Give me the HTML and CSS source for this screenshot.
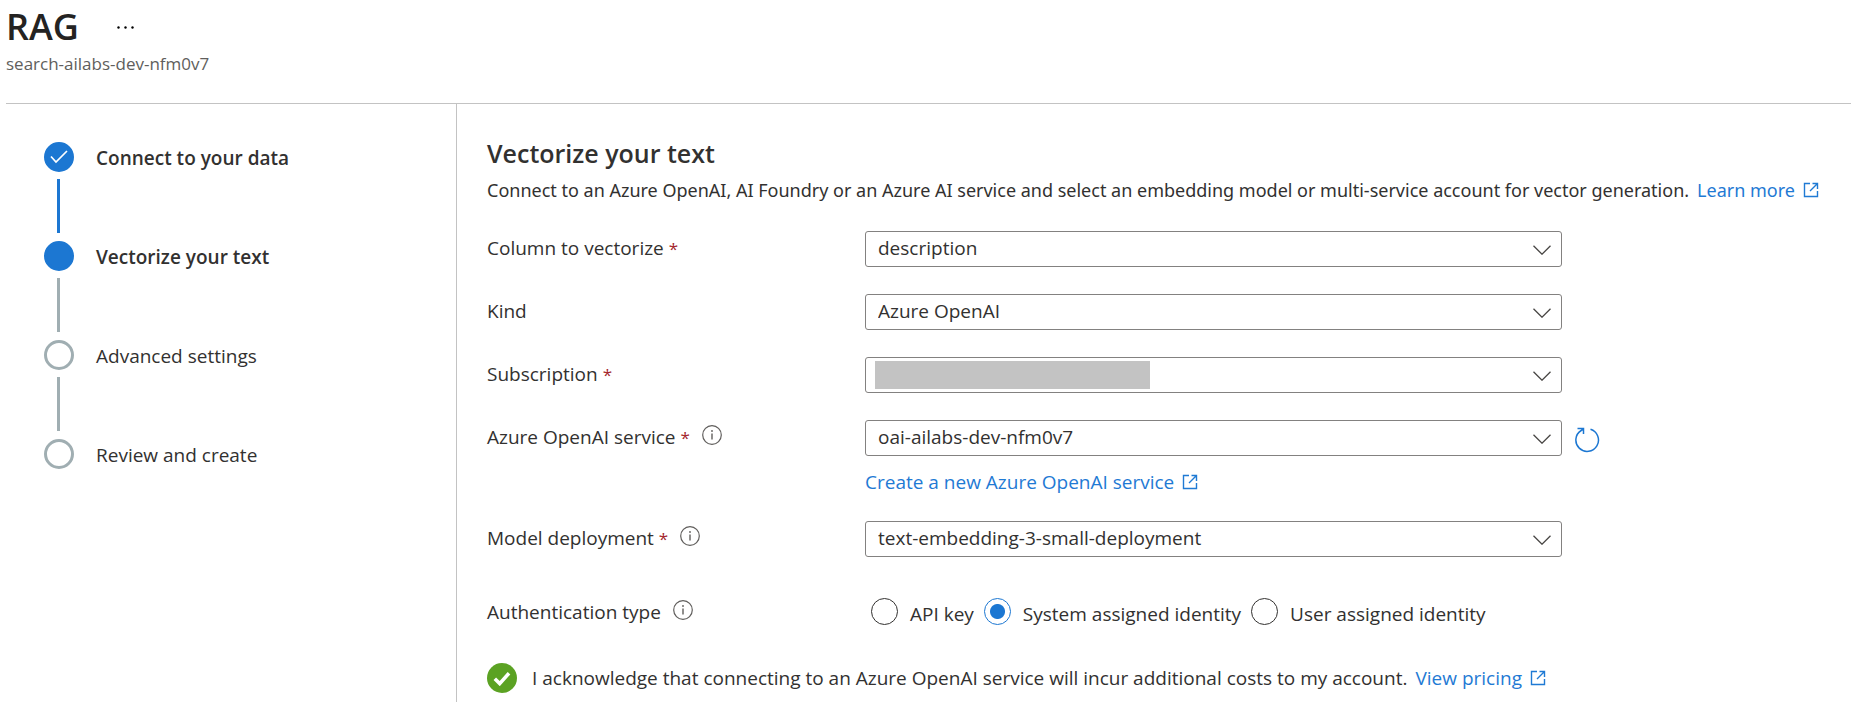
FILE: index.html
```html
<!DOCTYPE html>
<html lang="en">
<head>
<meta charset="utf-8">
<meta name="viewport" content="width=device-width, initial-scale=1">
<title>RAG</title>
<link rel="stylesheet" href="styles.css">
</head>
<body>
<svg class="sprite" aria-hidden="true">
  <symbol id="external" viewBox="0 0 16 16"><path d="M7 1.5H1.5v13h13V9M9.5 1.5h5V7M14.5 1.5 7 9" fill="none" stroke="currentColor" stroke-width="1.4"/></symbol>
  <symbol id="chevron" viewBox="0 0 18 10"><path d="M.5.8 9 9.2 17.5.8" fill="none" stroke="currentColor" stroke-width="1.3"/></symbol>
  <symbol id="info" viewBox="0 0 20 20"><circle cx="10" cy="10" r="9.3" fill="none" stroke="currentColor" stroke-width="1.2"/><path d="M10 8.4v6" stroke="currentColor" stroke-width="1.4"/><circle cx="10" cy="6" r=".9" fill="currentColor"/></symbol>
</svg>
<header class="header">
  <div class="title-row">
    <h1 class="title">RAG</h1>
    <button class="more" type="button" aria-label="More actions"><svg viewBox="0 0 17 3" width="17" height="3"><circle cx="1.5" cy="1.5" r="1.2"/><circle cx="8.5" cy="1.5" r="1.2"/><circle cx="15.5" cy="1.5" r="1.2"/></svg></button>
  </div>
  <p class="subtitle">search-ailabs-dev-nfm0v7</p>
</header>
<div class="layout">
  <nav class="sidebar" aria-label="Wizard steps">
    <ol class="steps">
      <li class="step step-done"><span class="dot"><svg viewBox="0 0 18 14" width="18" height="14"><path d="M1 6.5 6 12 17 1" fill="none" stroke="currentColor" stroke-width="1.7"/></svg></span><span class="step-name">Connect to your data</span></li>
      <li class="step step-current" aria-current="step"><span class="dot"></span><span class="step-name">Vectorize your text</span></li>
      <li class="step"><span class="dot"></span><span class="step-name">Advanced settings</span></li>
      <li class="step"><span class="dot"></span><span class="step-name">Review and create</span></li>
    </ol>
  </nav>
  <main class="main">
    <h2 class="heading">Vectorize your text</h2>
    <p class="intro"><span>Connect to an Azure OpenAI, AI Foundry or an Azure AI service and select an embedding model or multi-service account for vector generation.</span> <a class="link" href="#">Learn more<svg class="external"><use href="#external"/></svg></a></p>
    <form class="form">
      <div class="row">
        <div class="label"><label for="column">Column to vectorize <span class="required">*</span></label></div>
        <div class="select"><select id="column" required><option>description</option></select><svg class="chevron"><use href="#chevron"/></svg></div>
      </div>
      <div class="row">
        <div class="label"><label for="kind">Kind</label></div>
        <div class="select"><select id="kind"><option>Azure OpenAI</option></select><svg class="chevron"><use href="#chevron"/></svg></div>
      </div>
      <div class="row">
        <div class="label"><label for="subscription">Subscription <span class="required">*</span></label></div>
        <div class="select"><select id="subscription"><option></option></select><span class="redacted"></span><svg class="chevron"><use href="#chevron"/></svg></div>
      </div>
      <div class="row">
        <div class="label"><label for="service">Azure OpenAI service <span class="required">*</span></label><svg class="info"><use href="#info"/></svg></div>
        <div class="field">
          <div class="select"><select id="service"><option>oai-ailabs-dev-nfm0v7</option></select><svg class="chevron"><use href="#chevron"/></svg></div>
          <a class="link" href="#">Create a new Azure OpenAI service<svg class="external"><use href="#external"/></svg></a>
        </div>
        <button class="refresh" type="button" aria-label="Refresh"><svg viewBox="0 0 26 26" width="26" height="26"><path d="M16.5 2.3A11.3 11.3 0 1 1 7.2 3.5L9.5 2M3.5 1.6H9.5V7" fill="none" stroke="currentColor" stroke-width="1.5"/></svg></button>
      </div>
      <div class="row">
        <div class="label"><label for="model">Model deployment <span class="required">*</span></label><svg class="info"><use href="#info"/></svg></div>
        <div class="select"><select id="model"><option>text-embedding-3-small-deployment</option></select><svg class="chevron"><use href="#chevron"/></svg></div>
      </div>
      <div class="row row-auth" role="radiogroup" aria-labelledby="auth-label">
        <div class="label"><span id="auth-label">Authentication type</span><svg class="info"><use href="#info"/></svg></div>
        <div class="radios">
          <label class="radio"><input type="radio" name="auth"><span class="radio-text">API key</span></label>
          <label class="radio"><input type="radio" name="auth" checked><span class="radio-text">System assigned identity</span></label>
          <label class="radio"><input type="radio" name="auth"><span class="radio-text">User assigned identity</span></label>
        </div>
      </div>
      <div class="ack">
        <label class="ack-label"><span class="tick"><input type="checkbox" checked><svg viewBox="0 0 18 15" width="18" height="15"><path d="M1.8 7.8 6.7 12.6 16 2.2" fill="none" stroke="currentColor" stroke-width="3.6"/></svg></span><span>I acknowledge that connecting to an Azure OpenAI service will incur additional costs to my account.</span></label>
        <a class="link" href="#">View pricing<svg class="external"><use href="#external"/></svg></a>
      </div>
    </form>
  </main>
</div>
</body>
</html>
```
FILE: styles.css
```css
* { box-sizing: border-box; }

html, body { height: 100%; }

body {
  display: flex;
  flex-direction: column;
  margin: 0;
  overflow: hidden;
  background: #fff;
  color: #323130;
  font: 19px/28px "Open Sans", "Noto Sans", sans-serif;
}

h1, h2, p, ol { margin: 0; padding: 0; }

button { padding: 0; border: 0; background: none; color: inherit; }

svg { display: block; flex: none; }

.sprite { position: absolute; width: 0; height: 0; }

/* Page header */
.header {
  margin-left: 6px;
  padding: 3px 0 26px;
  border-bottom: 1px solid #c3c3c3;
}

.title-row { display: flex; align-items: center; gap: 38px; }

.title { font-size: 36px; line-height: 48px; font-weight: 600; color: #242322; }

.more { display: flex; }

.subtitle { color: #605e5c; font-size: 17px; line-height: 26px; }

/* Body */
.layout { display: flex; flex: 1; min-height: 0; }

.sidebar {
  flex: none;
  width: 457px;
  padding: 38px 0 0 44px;
  border-right: 1px solid #c3c3c3;
}

.steps { list-style: none; }

.step {
  display: grid;
  grid-template-columns: 30px 1fr;
  column-gap: 22px;
  align-items: center;
}

.step:not(:last-child)::after {
  content: "";
  width: 3px;
  height: 54px;
  margin: 7px 0 8px 13px;
  background: #a0aeb2;
}

.step.step-done::after { background: #1c77d2; }

.dot {
  display: grid;
  place-items: center;
  width: 30px;
  height: 30px;
  border: 3px solid #a0aeb2;
  border-radius: 50%;
  color: #fff;
}

.step-done .dot, .step-current .dot { border-color: #1c77d2; background: #1c77d2; }

.step-name { padding-top: 2px; }

.step-done .step-name, .step-current .step-name { font-weight: 600; }

.main { flex: 1; min-width: 0; padding: 31px 0 0 30px; }

.heading { font-size: 25px; line-height: 36px; font-weight: 600; }

.intro {
  display: flex;
  gap: 8px;
  margin-top: 5px;
  font-family: "Noto Sans", sans-serif;
  font-size: 18px;
  white-space: nowrap;
}

.link {
  display: inline-flex;
  align-items: center;
  gap: 8px;
  color: #1f7ad4;
  text-decoration: none;
}

.external { width: 16px; height: 16px; }

/* Form */
.form { display: flex; flex-direction: column; gap: 27px; margin-top: 27px; }

.row {
  display: grid;
  grid-template-columns: 378px minmax(0, 697px) auto;
  align-items: start;
}

.label { display: flex; align-items: center; gap: 12px; height: 34px; }

.required { color: #a4262c; font-size: 17px; line-height: 1; }

.info { width: 20px; height: 20px; margin-bottom: 4px; color: #605e5c; }

.field { display: grid; gap: 14px; justify-items: start; line-height: 24px; }

.select { position: relative; width: 100%; }

.select select {
  display: block;
  width: 100%;
  height: 36px;
  padding: 0 48px 2px 12px;
  border: 1px solid #838180;
  border-radius: 3px;
  appearance: none;
  background: #fff;
  color: inherit;
  font: inherit;
}

.chevron {
  position: absolute;
  top: 14px;
  right: 11px;
  width: 18px;
  height: 10px;
  color: #484644;
  pointer-events: none;
}

.redacted {
  position: absolute;
  top: 4px;
  left: 10px;
  width: 275px;
  height: 28px;
  background: #c3c3c3;
}

.refresh { display: flex; margin: 7px 0 0 12px; color: #1c77d2; }

.row-auth { padding-top: 11px; }

.radios { display: flex; gap: 10px; padding-left: 6px; }

.radio { display: flex; align-items: center; gap: 12px; height: 32px; white-space: nowrap; }

.radio-text { padding-top: 6px; }

.radio input {
  flex: none;
  width: 27px;
  height: 27px;
  margin: 0;
  border: 1px solid #323130;
  border-radius: 50%;
  appearance: none;
}

.radio input:checked {
  border-color: #1c77d2;
  background: radial-gradient(circle, #1c77d2 7px, transparent 8px);
}

.ack { display: flex; align-items: center; gap: 8px; padding-top: 7px; white-space: nowrap; }

.ack-label { display: flex; align-items: center; gap: 15px; }

.tick { display: grid; place-items: center; color: #fff; }

.tick input, .tick svg { grid-area: 1 / 1; }

.tick input {
  width: 30px;
  height: 30px;
  margin: 0;
  border-radius: 50%;
  appearance: none;
  background: #5ba223;
}

.tick svg { z-index: 1; pointer-events: none; }
```
